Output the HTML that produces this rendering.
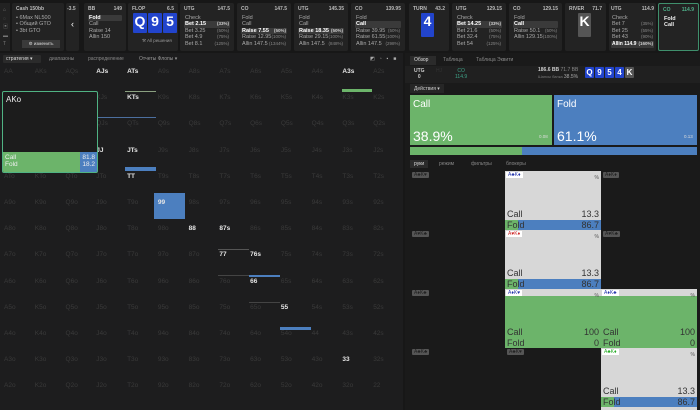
<!DOCTYPE html>
<html><head><meta charset="utf-8"><style>
*{margin:0;padding:0;box-sizing:border-box}
body{width:700px;height:410px;background:#171717;font-family:"Liberation Sans","Noto Sans CJK SC",sans-serif;color:#ccc;position:relative;overflow:hidden;font-size:6px}
.a{position:absolute;white-space:nowrap}
.p{position:absolute;top:3px;height:48px;background:#232323;border-radius:2px;padding:3px 4px;font-size:5.5px;line-height:6.6px;color:#aaa;white-space:nowrap;overflow:hidden}
.p .h{display:flex;justify-content:space-between;color:#bbb;font-weight:bold;font-size:5px;margin-bottom:2px}
.p .r{display:flex;justify-content:space-between;padding:0 1px}
.p .r i{font-style:normal;font-size:4.5px;color:#888}
.p .s{background:#3a3a3a;color:#fff;font-weight:bold;border-radius:1px}
.card{position:absolute;width:14px;height:20px;background:#2244cc;color:#fff;font-weight:bold;font-size:14px;text-align:center;line-height:16px;border-radius:1px}
.g{position:absolute;left:0;top:62px;width:400px;display:grid;grid-template-columns:repeat(13,30.77px);grid-auto-rows:26.2px;font-size:6.5px}
.g div{padding:6px 0 0 4px;color:#3a3a3a}
.g .b{color:#e6e6e6;font-weight:bold;font-size:6.5px}
.hc{position:absolute;width:96px;height:59px}
.tag{position:absolute;left:2px;top:1px;background:#555;color:#222;font-size:5px;padding:0 2px;border-radius:1px}
.gc{background:#d7d7d7}
.gc .l,.grn .l{position:absolute;left:2px;font-size:9px;color:#333}
.gc .v,.grn .v{position:absolute;right:2px;font-size:9px;color:#333}
.grn{background:#6cb46a}
.tg{position:absolute;left:1px;top:1px;background:#fff;font-size:5px;padding:0 2px;color:#2233aa}
</style></head><body>
<div class="a" style="left:0;top:3px;width:10px;height:48px;background:#222"></div>
<div class="a" style="left:3px;top:6px;color:#777;font-size:5px;line-height:8.5px">⌂<br>◌<br>▣<br>▬<br>T</div>
<div class="p" style="left:12px;width:52px"><div class="h"><span>Cash 150bb</span></div>
<div style="line-height:6.8px">• 6Max NL500<br>• Общий GTO<br>• 3bt GTO</div>
<div style="position:absolute;left:10px;top:37px;width:38px;height:8px;background:#3a3a3a;font-size:4.5px;text-align:center;line-height:8px;color:#ddd">⚙ изменить</div></div>
<div class="p" style="left:66px;width:13px;padding:3px 1px"><div class="h"><span>-3.5</span></div><div style="color:#fff;font-size:9px;margin-top:8px;text-align:center">‹</div></div>
<div class="p" style="left:84px;width:42px"><div class="h"><span>BB</span><span>149</span></div>
<div class="r s">Fold</div><div class="r">Call</div><div class="r">Raise 14</div><div class="r">Allin 150</div></div>
<div class="p" style="left:128px;width:50px"><div class="h"><span>FLOP</span><span>6.5</span></div>
<div style="position:absolute;bottom:6px;color:#999;font-size:4.5px;left:14px">⚒ All решения</div></div>
<div class="card" style="left:133px;top:13px">Q</div><div class="card" style="left:148px;top:13px">9</div><div class="card" style="left:163px;top:13px">5</div>
<div class="p" style="left:180px;width:54px"><div class="h"><span>UTG</span><span>147.5</span></div>
<div class="r">Check</div><div class="r s">Bet 2.15<i style="color:#ccc">(33%)</i></div><div class="r">Bet 3.25<i>(50%)</i></div><div class="r">Bet 4.9<i>(75%)</i></div><div class="r">Bet 8.1<i>(125%)</i></div></div>
<div class="p" style="left:237px;width:54px"><div class="h"><span>CO</span><span>147.5</span></div>
<div class="r">Fold</div><div class="r">Call</div><div class="r s">Raise 7.55<i style="color:#ccc">(50%)</i></div><div class="r">Raise 12.95<i>(100%)</i></div><div class="r">Allin 147.5<i>(1344%)</i></div></div>
<div class="p" style="left:294px;width:54px"><div class="h"><span>UTG</span><span>145.35</span></div>
<div class="r">Fold</div><div class="r">Call</div><div class="r s">Raise 18.35<i style="color:#ccc">(50%)</i></div><div class="r">Raise 29.15<i>(100%)</i></div><div class="r">Allin 147.5<i>(848%)</i></div></div>
<div class="p" style="left:351px;width:54px"><div class="h"><span>CO</span><span>139.95</span></div>
<div class="r">Fold</div><div class="r s">Call</div><div class="r">Raise 39.95<i>(50%)</i></div><div class="r">Raise 61.55<i>(100%)</i></div><div class="r">Allin 147.5<i>(298%)</i></div></div>
<div class="p" style="left:409px;width:40px"><div class="h"><span>TURN</span><span>43.2</span></div></div>
<div class="card" style="left:421px;top:13px;width:13px;height:24px">4</div>
<div class="p" style="left:452px;width:54px"><div class="h"><span>UTG</span><span>129.15</span></div>
<div class="r">Check</div><div class="r s">Bet 14.25<i style="color:#ccc">(33%)</i></div><div class="r">Bet 21.6<i>(50%)</i></div><div class="r">Bet 32.4<i>(75%)</i></div><div class="r">Bet 54<i>(125%)</i></div></div>
<div class="p" style="left:509px;width:53px"><div class="h"><span>CO</span><span>129.15</span></div>
<div class="r">Fold</div><div class="r s">Call</div><div class="r">Raise 50.1<i>(50%)</i></div><div class="r">Allin 129.15<i>(100%)</i></div></div>
<div class="p" style="left:565px;width:41px"><div class="h"><span>RIVER</span><span>71.7</span></div></div>
<div class="card" style="left:578px;top:13px;width:13px;height:24px;background:#555">K</div>
<div class="p" style="left:609px;width:47px;padding:3px 2px"><div class="h"><span>UTG</span><span>114.9</span></div>
<div class="r">Check</div><div class="r">Bet 7<i>(35%)</i></div><div class="r">Bet 25<i>(55%)</i></div><div class="r">Bet 43<i>(90%)</i></div><div class="r s" style="font-size:5px">Allin 114.9<i style="color:#ccc">(160%)</i></div></div>
<div class="p" style="left:658px;width:41px;border:1px solid #3f8f6c"><div class="h"><span style="color:#4fb08a">CO</span><span style="color:#4fb08a">114.9</span></div>
<div class="r" style="color:#eee;font-weight:bold">Fold</div><div class="r" style="color:#eee;font-weight:bold">Call</div></div>

<div class="a" style="left:0;top:53px;width:403px;height:357px;background:#1d1d1e"></div>
<div class="a" style="left:3px;top:55px;width:38px;height:8px;background:#2b2b2b;border-radius:1px"></div>
<div class="a" style="left:6px;top:56px;font-size:5px;color:#ddd">стратегия ▾</div>
<div class="a" style="left:49px;top:56px;font-size:5px;color:#888">диапазоны</div>
<div class="a" style="left:88px;top:56px;font-size:5px;color:#888">распределение</div>
<div class="a" style="left:139px;top:56px;font-size:5px;color:#999">Отчеты Флопы ▾</div>
<div class="a" style="left:370px;top:56px;font-size:5px;color:#aaa;letter-spacing:5px">◩▫▪■</div>

<div class="g">
<div>AA</div><div>AKs</div><div>AQs</div><div class="b">AJs</div><div class="b">ATs</div><div>A9s</div><div>A8s</div><div>A7s</div><div>A6s</div><div>A5s</div><div>A4s</div><div class="b">A3s</div><div>A2s</div>
<div>AKo</div><div>KK</div><div>KQs</div><div>KJs</div><div class="b">KTs</div><div>K9s</div><div>K8s</div><div>K7s</div><div>K6s</div><div>K5s</div><div>K4s</div><div>K3s</div><div>K2s</div>
<div>AQo</div><div>KQo</div><div>QQ</div><div>QJs</div><div>QTs</div><div>Q9s</div><div>Q8s</div><div>Q7s</div><div>Q6s</div><div>Q5s</div><div>Q4s</div><div>Q3s</div><div>Q2s</div>
<div>AJo</div><div>KJo</div><div>QJo</div><div class="b">JJ</div><div class="b">JTs</div><div>J9s</div><div>J8s</div><div>J7s</div><div>J6s</div><div>J5s</div><div>J4s</div><div>J3s</div><div>J2s</div>
<div>ATo</div><div>KTo</div><div>QTo</div><div>JTo</div><div class="b">TT</div><div>T9s</div><div>T8s</div><div>T7s</div><div>T6s</div><div>T5s</div><div>T4s</div><div>T3s</div><div>T2s</div>
<div>A9o</div><div>K9o</div><div>Q9o</div><div>J9o</div><div>T9o</div><div class="b" style="background:#4c7fbf">99</div><div>98s</div><div>97s</div><div>96s</div><div>95s</div><div>94s</div><div>93s</div><div>92s</div>
<div>A8o</div><div>K8o</div><div>Q8o</div><div>J8o</div><div>T8o</div><div>98o</div><div class="b">88</div><div class="b">87s</div><div>86s</div><div>85s</div><div>84s</div><div>83s</div><div>82s</div>
<div>A7o</div><div>K7o</div><div>Q7o</div><div>J7o</div><div>T7o</div><div>97o</div><div>87o</div><div class="b">77</div><div class="b">76s</div><div>75s</div><div>74s</div><div>73s</div><div>72s</div>
<div>A6o</div><div>K6o</div><div>Q6o</div><div>J6o</div><div>T6o</div><div>96o</div><div>86o</div><div>76o</div><div class="b">66</div><div>65s</div><div>64s</div><div>63s</div><div>62s</div>
<div>A5o</div><div>K5o</div><div>Q5o</div><div>J5o</div><div>T5o</div><div>95o</div><div>85o</div><div>75o</div><div>65o</div><div class="b">55</div><div>54s</div><div>53s</div><div>52s</div>
<div>A4o</div><div>K4o</div><div>Q4o</div><div>J4o</div><div>T4o</div><div>94o</div><div>84o</div><div>74o</div><div>64o</div><div>54o</div><div>44</div><div>43s</div><div>42s</div>
<div>A3o</div><div>K3o</div><div>Q3o</div><div>J3o</div><div>T3o</div><div>93o</div><div>83o</div><div>73o</div><div>63o</div><div>53o</div><div>43o</div><div class="b">33</div><div>32s</div>
<div>A2o</div><div>K2o</div><div>Q2o</div><div>J2o</div><div>T2o</div><div>92o</div><div>82o</div><div>72o</div><div>62o</div><div>52o</div><div>42o</div><div>32o</div><div>22</div>
</div>
<div class="a" style="left:342px;top:89px;width:30px;height:3px;background:#6cb46a"></div>
<div class="a" style="left:125px;top:91px;width:31px;height:1px;background:#8aa080"></div>
<div class="a" style="left:96px;top:117px;width:60px;height:1px;background:#4c6f9f"></div>
<div class="a" style="left:125px;top:167px;width:31px;height:4px;background:#4c7fbf"></div>
<div class="a" style="left:218px;top:249px;width:31px;height:1px;background:#555"></div>
<div class="a" style="left:218px;top:275px;width:31px;height:1px;background:#444"></div>
<div class="a" style="left:249px;top:275px;width:31px;height:2px;background:#4c7fbf"></div>
<div class="a" style="left:249px;top:302px;width:31px;height:1px;background:#444"></div>
<div class="a" style="left:280px;top:327px;width:31px;height:3px;background:#4c7fbf"></div>
<div class="a" style="left:2px;top:91px;width:96px;height:82px;background:#1c1c1c;border:1px solid #50b383;border-radius:2px;overflow:hidden">
<div class="a" style="left:3px;top:3px;font-size:8px;color:#eee">AKo</div>
<div class="a" style="left:0;top:60px;width:94px;height:21px;background:#6cb46a"></div>
<div class="a" style="left:77px;top:60px;width:17px;height:21px;background:#4c7fbf"></div>
<div class="a" style="left:2px;top:63px;font-size:6.5px;color:#eee;line-height:6.5px">Call<br>Fold</div>
<div class="a" style="right:2px;top:63px;font-size:6.5px;color:#eee;line-height:6.5px;text-align:right">81.8<br>18.2</div>
</div>

<div class="a" style="left:405px;top:53px;width:295px;height:357px;background:#1a1a1a"></div>
<div class="a" style="left:410px;top:56px;width:26px;height:9px;background:#2b2b2b"></div>
<div class="a" style="left:414px;top:57px;font-size:5px;color:#ddd">Обзор</div>
<div class="a" style="left:443px;top:57px;font-size:5px;color:#888">Таблица</div>
<div class="a" style="left:476px;top:57px;font-size:5px;color:#888">Таблица Эквити</div>
<div class="a" style="left:405px;top:66px;width:295px;height:17px;background:#202020"></div>
<div class="a" style="left:414px;top:68px;font-size:5px;color:#ccc;text-align:center;line-height:6px;font-weight:bold">UTG<br>0</div>
<div class="a" style="left:436px;top:68px;font-size:5px;color:#333;line-height:6px">HJ</div>
<div class="a" style="left:455px;top:68px;font-size:5px;color:#3fa58a;text-align:center;line-height:6px">CO<br>114.9</div>
<div class="a" style="left:538px;top:67px;font-size:5px;color:#ccc;font-weight:bold">186.6 BB <span style="color:#888;font-weight:normal">71.7 BB</span></div>
<div class="a" style="left:538px;top:74px;font-size:4px;color:#777">Шансы банка <span style="color:#aaa;font-size:5px">38.5%</span></div>
<div class="card" style="left:585px;top:67px;width:9px;height:11px;font-size:8px;line-height:11px">Q</div>
<div class="card" style="left:595px;top:67px;width:9px;height:11px;font-size:8px;line-height:11px">9</div>
<div class="card" style="left:605px;top:67px;width:9px;height:11px;font-size:8px;line-height:11px">5</div>
<div class="card" style="left:615px;top:67px;width:9px;height:11px;font-size:8px;line-height:11px">4</div>
<div class="card" style="left:625px;top:67px;width:9px;height:11px;font-size:8px;line-height:11px;background:#555">K</div>
<div class="a" style="left:410px;top:84px;width:34px;height:9px;background:#262626"></div>
<div class="a" style="left:414px;top:86px;font-size:5px;color:#ccc">Действия ▾</div>
<div class="a" style="left:410px;top:95px;width:142px;height:50px;background:#6cb46a"></div>
<div class="a" style="left:554px;top:95px;width:143px;height:50px;background:#4c7fbf"></div>
<div class="a" style="left:413px;top:99px;font-size:10px;color:#fff">Call</div>
<div class="a" style="left:557px;top:99px;font-size:10px;color:#fff">Fold</div>
<div class="a" style="left:413px;top:128px;font-size:14px;color:#fff">38.9%</div>
<div class="a" style="left:557px;top:128px;font-size:14px;color:#fff">61.1%</div>
<div class="a" style="left:539px;top:134px;font-size:4.5px;color:#ddd">0.08</div>
<div class="a" style="left:684px;top:134px;font-size:4.5px;color:#ddd">0.13</div>
<div class="a" style="left:410px;top:147px;width:287px;height:8px;background:#4c7fbf"></div>
<div class="a" style="left:410px;top:147px;width:112px;height:8px;background:#6cb46a"></div>
<div class="a" style="left:410px;top:160px;width:18px;height:8px;background:#2b2b2b"></div>
<div class="a" style="left:414px;top:161px;font-size:5px;color:#ddd">руки</div>
<div class="a" style="left:439px;top:161px;font-size:5px;color:#888">режим</div>
<div class="a" style="left:471px;top:161px;font-size:5px;color:#888">фильтры</div>
<div class="a" style="left:506px;top:161px;font-size:5px;color:#888">блокеры</div>

<div class="hc" style="left:410px;top:171px"><span class="tag">A♣K♥</span></div>
<div class="hc" style="left:410px;top:230px"><span class="tag">A♥K♣</span></div>
<div class="hc" style="left:410px;top:289px"><span class="tag">A♦K♣</span></div>
<div class="hc" style="left:410px;top:348px"><span class="tag">A♣K♣</span></div>

<div class="hc gc" style="left:505px;top:171px"><span class="tg">A♣K♦</span><span class="a" style="right:2px;top:4px;font-size:5px;color:#555">%</span>
<div class="a" style="left:0;top:49px;width:96px;height:10px;background:#4c7fbf"></div><div class="a" style="left:0;top:49px;width:13px;height:10px;background:#6cb46a"></div>
<span class="l" style="top:38px">Call</span><span class="v" style="top:38px">13.3</span><span class="l" style="top:49px">Fold</span><span class="v" style="top:49px">86.7</span></div>
<div class="hc gc" style="left:505px;top:230px"><span class="tg" style="color:#c22">A♥K♦</span><span class="a" style="right:2px;top:4px;font-size:5px;color:#555">%</span>
<div class="a" style="left:0;top:49px;width:96px;height:10px;background:#4c7fbf"></div><div class="a" style="left:0;top:49px;width:13px;height:10px;background:#6cb46a"></div>
<span class="l" style="top:38px">Call</span><span class="v" style="top:38px">13.3</span><span class="l" style="top:49px">Fold</span><span class="v" style="top:49px">86.7</span></div>
<div class="hc grn" style="left:505px;top:289px"><div class="a" style="left:0;top:0;width:96px;height:7px;background:#d7d7d7"></div><span class="tg">A♦K♥</span><span class="a" style="right:2px;top:4px;font-size:5px;color:#555">%</span>
<span class="l" style="top:38px">Call</span><span class="v" style="top:38px">100</span><span class="l" style="top:49px">Fold</span><span class="v" style="top:49px">0</span></div>
<div class="hc" style="left:505px;top:348px"><span class="tag">A♣K♥</span></div>

<div class="hc" style="left:601px;top:171px"><span class="tag">A♦K♦</span></div>
<div class="hc" style="left:601px;top:230px"><span class="tag">A♥K♣</span></div>
<div class="hc grn" style="left:601px;top:289px"><div class="a" style="left:0;top:0;width:96px;height:7px;background:#d7d7d7"></div><span class="tg">A♦K♣</span><span class="a" style="right:2px;top:4px;font-size:5px;color:#555">%</span>
<span class="l" style="top:38px">Call</span><span class="v" style="top:38px">100</span><span class="l" style="top:49px">Fold</span><span class="v" style="top:49px">0</span></div>
<div class="hc gc" style="left:601px;top:348px;height:62px"><span class="tg" style="color:#2a2">A♣K♦</span><span class="a" style="right:2px;top:4px;font-size:5px;color:#555">%</span>
<div class="a" style="left:0;top:49px;width:96px;height:10px;background:#4c7fbf"></div><div class="a" style="left:0;top:49px;width:13px;height:10px;background:#6cb46a"></div>
<span class="l" style="top:38px">Call</span><span class="v" style="top:38px">13.3</span><span class="l" style="top:49px">Fold</span><span class="v" style="top:49px">86.7</span></div>
</body></html>
